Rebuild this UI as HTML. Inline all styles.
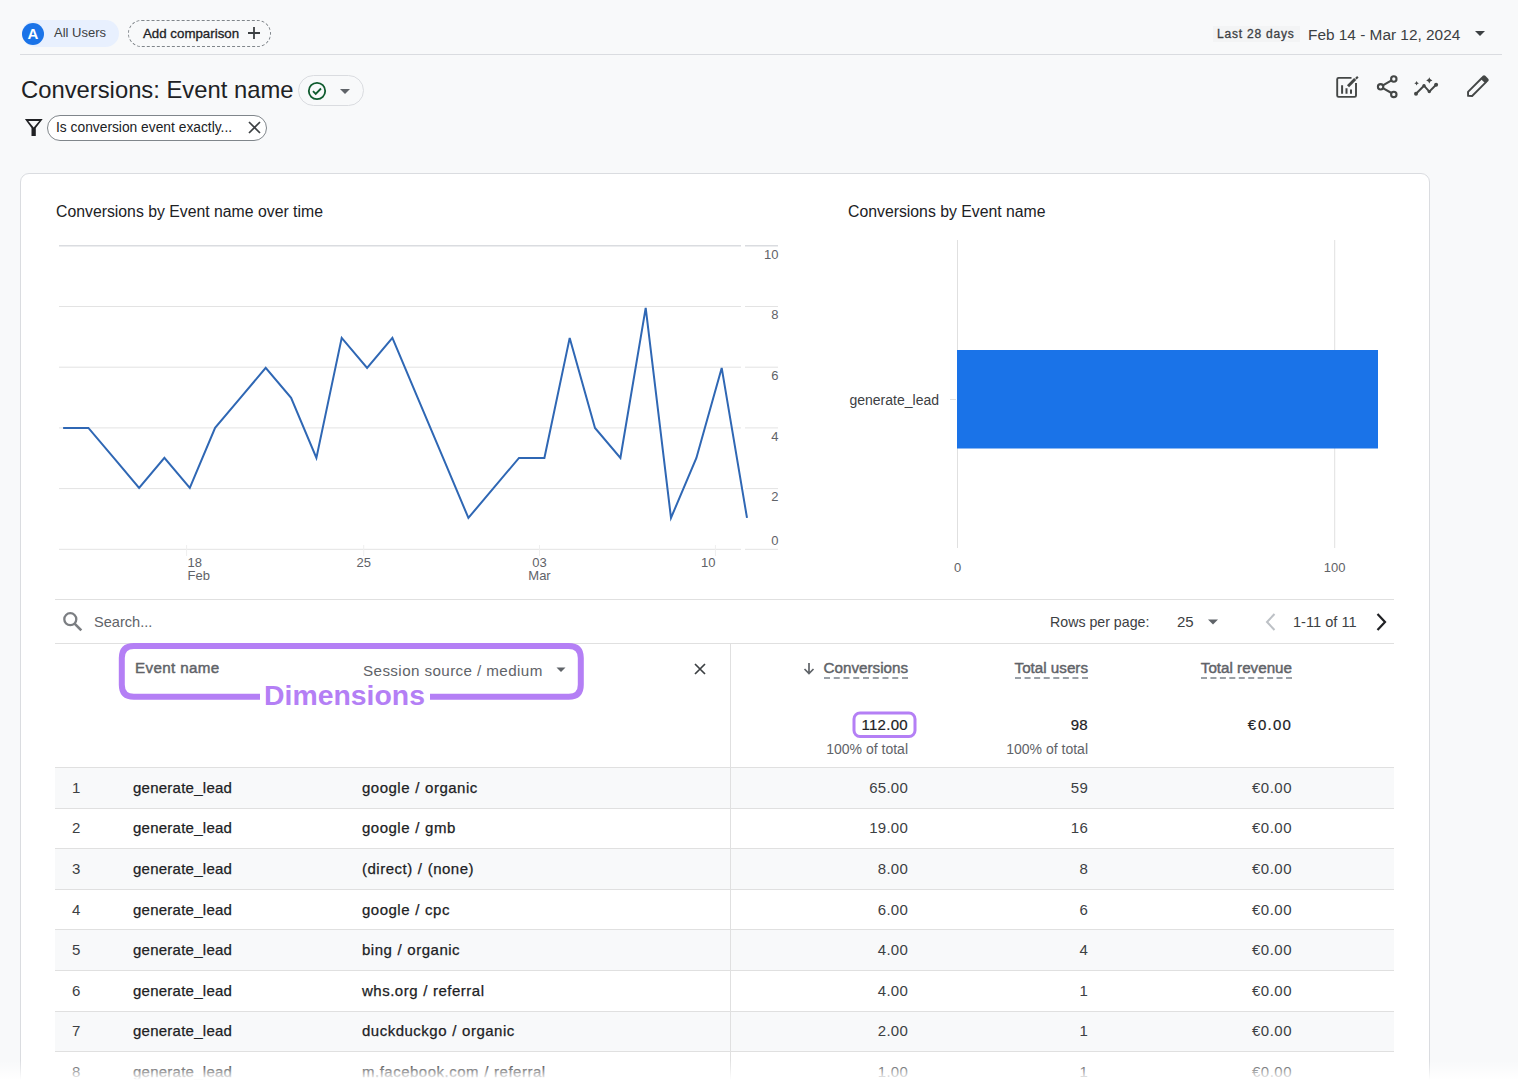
<!DOCTYPE html>
<html><head><meta charset="utf-8">
<style>
*{box-sizing:border-box;margin:0;padding:0}
html,body{width:1518px;height:1092px;overflow:hidden;background:#f8f9fa;font-family:"Liberation Sans",sans-serif;color:#202124}
.a{position:absolute;white-space:nowrap}
#root{position:relative;width:1518px;height:1092px;overflow:hidden}
.card{position:absolute;left:20px;top:173px;width:1410px;height:1000px;background:#fff;border:1px solid #dadce0;border-radius:9px}
.hl{position:absolute;height:1px;background:#e0e0e0}
.vl{position:absolute;width:1px;background:#e0e0e0}
.row{position:absolute;left:55px;width:1339px;height:41px}
.alt{background:#f8f9fa}
.num{position:absolute;text-align:right;white-space:nowrap}
</style></head><body><div id="root">

<!-- top bar -->
<div class="a" style="left:22px;top:20px;width:97px;height:27px;background:#e8f0fe;border-radius:14px"></div>
<div class="a" style="left:22px;top:23px;width:22px;height:22px;background:#1a73e8;border-radius:50%;color:#fff;font-weight:700;font-size:15px;line-height:22px;text-align:center">A</div>
<div class="a" style="left:54px;top:25px;font-size:13px;line-height:16px;color:#3c4043">All Users</div>
<div class="a" style="left:128px;top:20px;width:143px;height:27px;border:1px dashed #80868b;border-radius:14px"></div>
<div class="a" style="left:143px;top:26px;font-size:13.3px;line-height:16px;color:#202124;-webkit-text-stroke:0.3px #202124">Add comparison</div>
<svg class="a" style="left:247px;top:26px" width="14" height="14" viewBox="0 0 14 14"><path d="M7 1v12M1 7h12" stroke="#3c4043" stroke-width="1.8"/></svg>
<div class="hl" style="left:20px;top:54px;width:1482px;background:#dadce0"></div>

<div class="a" style="left:1213px;top:26px;width:87px;height:16px;background:#f3f4f5"></div>
<div class="a" style="left:1217px;top:27px;font-size:12px;line-height:14px;color:#3c4043;letter-spacing:0.8px;-webkit-text-stroke:0.3px #3c4043">Last 28 days</div>
<div class="a" style="left:1308px;top:26px;font-size:15.4px;line-height:18px;color:#3c4043">Feb 14 - Mar 12, 2024</div>
<svg class="a" style="left:1474px;top:31px" width="12" height="6" viewBox="0 0 12 6"><path d="M1 0h10L6 5z" fill="#3c4043"/></svg>

<!-- title -->
<div class="a" style="left:21px;top:76px;font-size:23.8px;line-height:28px;color:#202124">Conversions: Event name</div>
<div class="a" style="left:298px;top:75px;width:66px;height:31px;border:1px solid #dadce0;border-radius:16px"></div>
<svg class="a" style="left:307px;top:81px" width="20" height="20" viewBox="0 0 20 20"><circle cx="10" cy="10" r="8.2" fill="none" stroke="#0f5b2e" stroke-width="1.8"/><path d="M6 10.2l2.7 2.7 5.3-5.4" fill="none" stroke="#0f5b2e" stroke-width="1.8"/></svg>
<svg class="a" style="left:340px;top:89px" width="10" height="6" viewBox="0 0 10 6"><path d="M0 0h10L5 5z" fill="#5f6368"/></svg>

<svg class="a" style="left:24px;top:118px" width="19" height="19" viewBox="0 0 19 19"><path d="M0.9 1.1H18.7L11.8 10V18H7.5V10ZM4.3 3H15.2L9.7 9.6Z" fill="#202124" fill-rule="evenodd"/></svg>
<div class="a" style="left:47px;top:115px;width:220px;height:26px;border:1px solid #80868b;border-radius:13px;background:#fff"></div>
<div class="a" style="left:56px;top:120px;font-size:13.8px;line-height:16px;color:#202124">Is conversion event exactly...</div>
<svg class="a" style="left:248px;top:121px" width="13" height="13" viewBox="0 0 13 13"><path d="M1 1l11 11M12 1L1 12" stroke="#3c4043" stroke-width="1.7"/></svg>

<!-- icons right -->
<svg class="a" style="left:0;top:0" width="1518" height="110" viewBox="0 0 1518 110">
<g fill="none" stroke="#444746" stroke-width="1.9" stroke-linecap="butt">
<path d="M1351.5 77.9H1338.6q-1.4 0-1.4 1.4V95.5q0 1.4 1.4 1.4H1354.6q1.4 0 1.4-1.4V83"/>
<path d="M1342.1 85.2V93.7M1346.5 88.2V93.7M1351 89.4V93.7" stroke-width="2"/>
<path d="M1348 86.2L1355.2 79" stroke-width="3"/>
<path d="M1356.1 77.1L1357.6 78.6" stroke-width="2.8"/>
<circle cx="1380.6" cy="86.8" r="2.7" stroke-width="2.1"/>
<circle cx="1393.8" cy="79" r="2.7" stroke-width="2.1"/>
<circle cx="1393.8" cy="94.4" r="2.7" stroke-width="2.1"/>
<path d="M1382.9 85.4L1391.5 80.4M1382.9 88.2L1391.5 93" stroke-width="2.1"/>
<path d="M1416 93.7L1424 85.7L1429.3 91.6L1436.1 84.8" stroke-width="2"/>
</g>
<g fill="#444746">
<circle cx="1416" cy="93.7" r="2"/><circle cx="1424" cy="85.7" r="1.7"/><circle cx="1429.3" cy="91.6" r="1.7"/><circle cx="1436.1" cy="84.8" r="2"/>
<path d="M1429.3 77.2Q1429.8 79.9 1432.4 80.4Q1429.8 80.9 1429.3 83.6Q1428.8 80.9 1426.2 80.4Q1428.8 79.9 1429.3 77.2Z"/>
<path d="M1416.6 81Q1417 82.9 1418.9 83.3Q1417 83.7 1416.6 85.6Q1416.2 83.7 1414.3 83.3Q1416.2 82.9 1416.6 81Z"/>
</g>
<g transform="translate(1477 87) rotate(-45)"><path d="M-12.6 0L-9.8 -2.9H9.5V2.9H-9.8Z" fill="none" stroke="#444746" stroke-width="1.9" stroke-linejoin="round"/><rect x="8.6" y="-3.85" width="5.2" height="7.7" rx="1.8" fill="#444746"/></g>
</svg>

<!-- card -->
<div class="card"></div>

<div class="a" style="left:56px;top:203px;font-size:15.8px;line-height:18px;color:#202124">Conversions by Event name over time</div>
<div class="a" style="left:848px;top:203px;font-size:15.8px;line-height:18px;color:#202124">Conversions by Event name</div>

<!-- charts -->
<svg class="a" style="left:0;top:0" width="1518" height="600" viewBox="0 0 1518 600">
<path d="M59 245.8H741M745 245.8H778" stroke="#dadce0" stroke-width="1.6"/><path d="M59 306.5H741M745 306.5H778" stroke="#e3e3e3" stroke-width="1"/><path d="M59 367.2H741M745 367.2H778" stroke="#e3e3e3" stroke-width="1"/><path d="M59 427.9H741M745 427.9H778" stroke="#e3e3e3" stroke-width="1"/><path d="M59 488.6H741M745 488.6H778" stroke="#e3e3e3" stroke-width="1"/><path d="M59 549.3H741M745 549.3H778" stroke="#e3e3e3" stroke-width="1"/><path d="M186.6 545V556" stroke="#efefef" stroke-width="1"/><path d="M363.7 545V556" stroke="#efefef" stroke-width="1"/><path d="M539.5 545V556" stroke="#efefef" stroke-width="1"/><path d="M715.4 545V556" stroke="#efefef" stroke-width="1"/>
<polyline points="63.1,427.9 88.4,427.9 113.8,457.9 139.1,487.9 164.4,457.9 189.8,487.9 215.1,427.9 240.4,397.9 265.7,367.9 291.1,397.9 316.4,457.9 341.7,337.9 367.1,367.9 392.4,337.9 417.7,397.9 443.1,457.9 468.4,517.9 493.7,487.9 519.0,457.9 544.4,457.9 569.7,337.9 595.0,427.9 620.4,457.9 645.7,307.9 671.0,517.9 696.4,457.9 721.7,367.9 747.0,517.9" fill="none" stroke="#2f67b4" stroke-width="2" stroke-linejoin="miter"/>
<g font-family="Liberation Sans" font-size="13" fill="#5f6368"><text x="778.5" y="258.7" text-anchor="end">10</text><text x="778.5" y="319.3" text-anchor="end">8</text><text x="778.5" y="380" text-anchor="end">6</text><text x="778.5" y="440.7" text-anchor="end">4</text><text x="778.5" y="501.4" text-anchor="end">2</text><text x="778.5" y="545" text-anchor="end">0</text><text x="187.5" y="567">18</text><text x="187.5" y="580">Feb</text><text x="363.7" y="567" text-anchor="middle">25</text><text x="539.5" y="567" text-anchor="middle">03</text><text x="539.5" y="580" text-anchor="middle">Mar</text><text x="715.4" y="567" text-anchor="end">10</text></g>
<path d="M957.5 240V548M1334.7 240V548" stroke="#e0e0e0" stroke-width="1"/>
<path d="M950 399.5H956" stroke="#e0e0e0" stroke-width="1"/>
<rect x="957" y="350" width="421" height="98.5" fill="#1a73e8"/>
<g font-family="Liberation Sans" font-size="13" fill="#5f6368"><text x="957.5" y="572" text-anchor="middle">0</text><text x="1334.7" y="572" text-anchor="middle">100</text></g>
<text x="939" y="404.7" text-anchor="end" font-family="Liberation Sans" font-size="14" fill="#3c4043">generate_lead</text>
</svg>

<!-- table -->
<div class="hl" style="left:55px;top:599px;width:1339px;background:#e0e0e0"></div>
<svg class="a" style="left:60px;top:610px" width="26" height="24" viewBox="0 0 26 24"><circle cx="10.3" cy="9.2" r="6" fill="none" stroke="#7b7e82" stroke-width="2.3"/><path d="M14.6 13.6L21.3 20.3" stroke="#7b7e82" stroke-width="2.6"/></svg>
<div class="a" style="left:94px;top:614px;font-size:14.6px;line-height:16px;color:#5f6368">Search...</div>
<div class="a" style="left:1050px;top:614px;font-size:14.2px;line-height:16px;color:#3c4043">Rows per page:</div>
<div class="a" style="left:1177px;top:614px;font-size:15px;line-height:16px;color:#3c4043">25</div>
<svg class="a" style="left:1207px;top:619px" width="12" height="6" viewBox="0 0 12 6"><path d="M1 0.5h10L6 5.5z" fill="#5f6368"/></svg>
<svg class="a" style="left:1262px;top:612px" width="18" height="20" viewBox="0 0 18 20"><path d="M12.5 2L5 10l7.5 8" fill="none" stroke="#bdc1c6" stroke-width="2"/></svg>
<div class="a" style="left:1293px;top:614px;font-size:14.6px;line-height:16px;color:#3c4043">1-11 of 11</div>
<svg class="a" style="left:1373px;top:612px" width="18" height="20" viewBox="0 0 18 20"><path d="M4.5 2L12 10l-7.5 8" fill="none" stroke="#202124" stroke-width="2.2"/></svg>
<div class="hl" style="left:55px;top:643px;width:1339px;background:#e0e0e0"></div>
<div class="a" style="left:55px;top:767px;width:1339px;height:41px;background:#f8f9fa"></div>
<div class="a" style="left:55px;top:808px;width:1339px;height:40px;background:#fff"></div>
<div class="a" style="left:55px;top:848px;width:1339px;height:41px;background:#f8f9fa"></div>
<div class="a" style="left:55px;top:889px;width:1339px;height:40px;background:#fff"></div>
<div class="a" style="left:55px;top:929px;width:1339px;height:41px;background:#f8f9fa"></div>
<div class="a" style="left:55px;top:970px;width:1339px;height:41px;background:#fff"></div>
<div class="a" style="left:55px;top:1011px;width:1339px;height:40px;background:#f8f9fa"></div>
<div class="a" style="left:55px;top:1051px;width:1339px;height:41px;background:#fff"></div>
<div class="hl" style="left:55px;top:767px;width:1339px;background:#e0e0e0"></div>
<div class="hl" style="left:55px;top:808px;width:1339px;background:#e0e0e0"></div>
<div class="hl" style="left:55px;top:848px;width:1339px;background:#e0e0e0"></div>
<div class="hl" style="left:55px;top:889px;width:1339px;background:#e0e0e0"></div>
<div class="hl" style="left:55px;top:929px;width:1339px;background:#e0e0e0"></div>
<div class="hl" style="left:55px;top:970px;width:1339px;background:#e0e0e0"></div>
<div class="hl" style="left:55px;top:1011px;width:1339px;background:#e0e0e0"></div>
<div class="hl" style="left:55px;top:1051px;width:1339px;background:#e0e0e0"></div>
<div class="vl" style="left:730px;top:643px;height:450px;background:#e0e0e0"></div>
<div class="a" style="left:135px;top:660px;font-size:15.2px;line-height:16px;color:#5f6368;-webkit-text-stroke:0.45px #5f6368;letter-spacing:0.35px">Event name</div>
<div class="a" style="left:363px;top:663px;font-size:15.2px;line-height:16px;color:#5f6368;letter-spacing:0.4px">Session source / medium</div>
<svg class="a" style="left:555px;top:667px" width="12" height="6" viewBox="0 0 12 6"><path d="M1.5 0.5h9L6 5z" fill="#5f6368"/></svg>
<svg class="a" style="left:692px;top:661px" width="16" height="16" viewBox="0 0 16 16"><path d="M3 3l10 10M13 3L3 13" stroke="#3c4043" stroke-width="1.7"/></svg>
<svg class="a" style="left:802px;top:661px" width="14" height="14" viewBox="0 0 14 14"><path d="M7 2V12.5M2.5 8L7 12.5L11.5 8" fill="none" stroke="#5f6368" stroke-width="1.7"/></svg>
<div class="num" style="right:610px;top:660px;font-size:15.2px;line-height:16px;color:#5f6368;-webkit-text-stroke:0.45px #5f6368;letter-spacing:0px"><span style="border-bottom:2px dashed #9aa0a6;padding-bottom:1px">Conversions</span></div>
<div class="num" style="right:430px;top:660px;font-size:15.2px;line-height:16px;color:#5f6368;-webkit-text-stroke:0.45px #5f6368;letter-spacing:0px"><span style="border-bottom:2px dashed #9aa0a6;padding-bottom:1px">Total users</span></div>
<div class="num" style="right:226px;top:660px;font-size:15.2px;line-height:16px;color:#5f6368;-webkit-text-stroke:0.45px #5f6368;letter-spacing:0px"><span style="border-bottom:2px dashed #9aa0a6;padding-bottom:1px">Total revenue</span></div>
<div class="num" style="right:610px;top:717px;font-size:15px;line-height:16px;color:#202124;-webkit-text-stroke:0.2px #202124;letter-spacing:0.3px">112.00</div>
<div class="num" style="right:430px;top:717px;font-size:15px;line-height:16px;color:#202124;-webkit-text-stroke:0.2px #202124;letter-spacing:0.3px">98</div>
<div class="num" style="right:226px;top:717px;font-size:15px;line-height:16px;color:#202124;-webkit-text-stroke:0.2px #202124;letter-spacing:1.2px"><span style="letter-spacing:2px">€</span>0.00</div>
<div class="num" style="right:610px;top:742px;font-size:14px;line-height:14px;color:#5f6368">100% of total</div>
<div class="num" style="right:430px;top:742px;font-size:14px;line-height:14px;color:#5f6368">100% of total</div>
<div class="a" style="left:72px;top:780px;font-size:15px;line-height:16px;color:#3c4043">1</div>
<div class="a" style="left:133px;top:780px;font-size:15px;line-height:16px;color:#202124;-webkit-text-stroke:0.25px #202124;letter-spacing:0.25px">generate_lead</div>
<div class="a" style="left:362px;top:780px;font-size:15px;line-height:16px;color:#202124;-webkit-text-stroke:0.25px #202124;letter-spacing:0.5px;word-spacing:0.5px">google / organic</div>
<div class="num" style="right:610px;top:780px;font-size:15px;line-height:16px;color:#3c4043;letter-spacing:0.25px">65.00</div>
<div class="num" style="right:430px;top:780px;font-size:15px;line-height:16px;color:#3c4043;letter-spacing:0.25px">59</div>
<div class="num" style="right:226px;top:780px;font-size:15px;line-height:16px;color:#3c4043;letter-spacing:0.5px">€0.00</div>
<div class="a" style="left:72px;top:820px;font-size:15px;line-height:16px;color:#3c4043">2</div>
<div class="a" style="left:133px;top:820px;font-size:15px;line-height:16px;color:#202124;-webkit-text-stroke:0.25px #202124;letter-spacing:0.25px">generate_lead</div>
<div class="a" style="left:362px;top:820px;font-size:15px;line-height:16px;color:#202124;-webkit-text-stroke:0.25px #202124;letter-spacing:0.5px;word-spacing:0.5px">google / gmb</div>
<div class="num" style="right:610px;top:820px;font-size:15px;line-height:16px;color:#3c4043;letter-spacing:0.25px">19.00</div>
<div class="num" style="right:430px;top:820px;font-size:15px;line-height:16px;color:#3c4043;letter-spacing:0.25px">16</div>
<div class="num" style="right:226px;top:820px;font-size:15px;line-height:16px;color:#3c4043;letter-spacing:0.5px">€0.00</div>
<div class="a" style="left:72px;top:861px;font-size:15px;line-height:16px;color:#3c4043">3</div>
<div class="a" style="left:133px;top:861px;font-size:15px;line-height:16px;color:#202124;-webkit-text-stroke:0.25px #202124;letter-spacing:0.25px">generate_lead</div>
<div class="a" style="left:362px;top:861px;font-size:15px;line-height:16px;color:#202124;-webkit-text-stroke:0.25px #202124;letter-spacing:0.5px;word-spacing:0.5px">(direct) / (none)</div>
<div class="num" style="right:610px;top:861px;font-size:15px;line-height:16px;color:#3c4043;letter-spacing:0.25px">8.00</div>
<div class="num" style="right:430px;top:861px;font-size:15px;line-height:16px;color:#3c4043;letter-spacing:0.25px">8</div>
<div class="num" style="right:226px;top:861px;font-size:15px;line-height:16px;color:#3c4043;letter-spacing:0.5px">€0.00</div>
<div class="a" style="left:72px;top:902px;font-size:15px;line-height:16px;color:#3c4043">4</div>
<div class="a" style="left:133px;top:902px;font-size:15px;line-height:16px;color:#202124;-webkit-text-stroke:0.25px #202124;letter-spacing:0.25px">generate_lead</div>
<div class="a" style="left:362px;top:902px;font-size:15px;line-height:16px;color:#202124;-webkit-text-stroke:0.25px #202124;letter-spacing:0.5px;word-spacing:0.5px">google / cpc</div>
<div class="num" style="right:610px;top:902px;font-size:15px;line-height:16px;color:#3c4043;letter-spacing:0.25px">6.00</div>
<div class="num" style="right:430px;top:902px;font-size:15px;line-height:16px;color:#3c4043;letter-spacing:0.25px">6</div>
<div class="num" style="right:226px;top:902px;font-size:15px;line-height:16px;color:#3c4043;letter-spacing:0.5px">€0.00</div>
<div class="a" style="left:72px;top:942px;font-size:15px;line-height:16px;color:#3c4043">5</div>
<div class="a" style="left:133px;top:942px;font-size:15px;line-height:16px;color:#202124;-webkit-text-stroke:0.25px #202124;letter-spacing:0.25px">generate_lead</div>
<div class="a" style="left:362px;top:942px;font-size:15px;line-height:16px;color:#202124;-webkit-text-stroke:0.25px #202124;letter-spacing:0.5px;word-spacing:0.5px">bing / organic</div>
<div class="num" style="right:610px;top:942px;font-size:15px;line-height:16px;color:#3c4043;letter-spacing:0.25px">4.00</div>
<div class="num" style="right:430px;top:942px;font-size:15px;line-height:16px;color:#3c4043;letter-spacing:0.25px">4</div>
<div class="num" style="right:226px;top:942px;font-size:15px;line-height:16px;color:#3c4043;letter-spacing:0.5px">€0.00</div>
<div class="a" style="left:72px;top:983px;font-size:15px;line-height:16px;color:#3c4043">6</div>
<div class="a" style="left:133px;top:983px;font-size:15px;line-height:16px;color:#202124;-webkit-text-stroke:0.25px #202124;letter-spacing:0.25px">generate_lead</div>
<div class="a" style="left:362px;top:983px;font-size:15px;line-height:16px;color:#202124;-webkit-text-stroke:0.25px #202124;letter-spacing:0.5px;word-spacing:0.5px">whs.org / referral</div>
<div class="num" style="right:610px;top:983px;font-size:15px;line-height:16px;color:#3c4043;letter-spacing:0.25px">4.00</div>
<div class="num" style="right:430px;top:983px;font-size:15px;line-height:16px;color:#3c4043;letter-spacing:0.25px">1</div>
<div class="num" style="right:226px;top:983px;font-size:15px;line-height:16px;color:#3c4043;letter-spacing:0.5px">€0.00</div>
<div class="a" style="left:72px;top:1023px;font-size:15px;line-height:16px;color:#3c4043">7</div>
<div class="a" style="left:133px;top:1023px;font-size:15px;line-height:16px;color:#202124;-webkit-text-stroke:0.25px #202124;letter-spacing:0.25px">generate_lead</div>
<div class="a" style="left:362px;top:1023px;font-size:15px;line-height:16px;color:#202124;-webkit-text-stroke:0.25px #202124;letter-spacing:0.5px;word-spacing:0.5px">duckduckgo / organic</div>
<div class="num" style="right:610px;top:1023px;font-size:15px;line-height:16px;color:#3c4043;letter-spacing:0.25px">2.00</div>
<div class="num" style="right:430px;top:1023px;font-size:15px;line-height:16px;color:#3c4043;letter-spacing:0.25px">1</div>
<div class="num" style="right:226px;top:1023px;font-size:15px;line-height:16px;color:#3c4043;letter-spacing:0.5px">€0.00</div>
<div class="a" style="left:72px;top:1064px;font-size:15px;line-height:16px;color:#3c4043">8</div>
<div class="a" style="left:133px;top:1064px;font-size:15px;line-height:16px;color:#202124;-webkit-text-stroke:0.25px #202124;letter-spacing:0.25px">generate_lead</div>
<div class="a" style="left:362px;top:1064px;font-size:15px;line-height:16px;color:#202124;-webkit-text-stroke:0.25px #202124;letter-spacing:0.5px;word-spacing:0.5px">m.facebook.com / referral</div>
<div class="num" style="right:610px;top:1064px;font-size:15px;line-height:16px;color:#3c4043;letter-spacing:0.25px">1.00</div>
<div class="num" style="right:430px;top:1064px;font-size:15px;line-height:16px;color:#3c4043;letter-spacing:0.25px">1</div>
<div class="num" style="right:226px;top:1064px;font-size:15px;line-height:16px;color:#3c4043;letter-spacing:0.5px">€0.00</div>
<svg class="a" style="left:0;top:600px" width="1518" height="160" viewBox="0 600 1518 160">
<path d="M260 696.8H133.8Q121.8 696.8 121.8 684.8V658Q121.8 646 133.8 646H568.8Q580.8 646 580.8 658V684.8Q580.8 696.8 568.8 696.8H430" fill="none" stroke="#b47ff5" stroke-width="6"/>
<rect x="854" y="713" width="61" height="23.5" rx="6" fill="none" stroke="#b47ff5" stroke-width="3"/>
<text x="264" y="704.5" font-family="Liberation Sans" font-weight="700" font-size="28.4" fill="#b47ff5">Dimensions</text>
</svg>

<!-- bottom fade -->
<div class="a" style="left:0;top:1060px;width:1518px;height:32px;background:linear-gradient(to bottom,rgba(255,255,255,0) 0%,rgba(255,255,255,0.35) 25%,rgba(255,255,255,1) 62%)"></div>
</div></body></html>
